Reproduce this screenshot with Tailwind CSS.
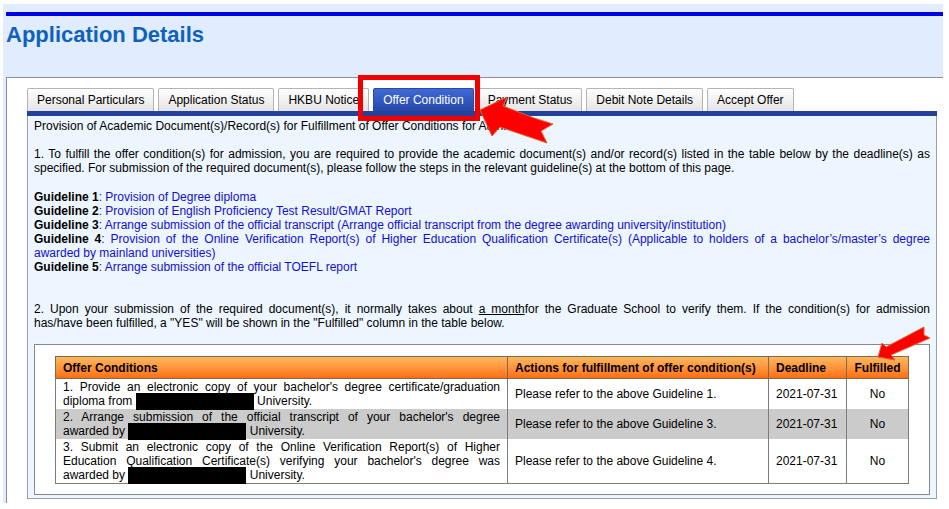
<!DOCTYPE html>
<html lang="en">
<head>
    <meta charset="UTF-8">
    <meta name="viewport" content="width=device-width, initial-scale=1.0">
    <title>Application Details</title>
    <script src="https://cdn.jsdelivr.net/npm/@tailwindcss/browser@4"></script>
</head>
<body class="bg-white font-['Liberation_Sans',Arial,sans-serif] text-[12px] leading-[14px] text-black">
    <div class="relative mt-1 mr-[6px] ml-[3px] bg-[#e1edff] pt-2 pl-[3px]">
        <div class="h-[4px] bg-[#0000e6]"></div>
        <h1 class="mt-[5px] mb-7 text-[22px] leading-7 font-bold text-[#0d62bf]">Application Details</h1>

        <!-- Main panel -->
        <div class="border-t border-l border-[#8a8f99] bg-white pt-[10px] pr-[6px] pb-1 pl-5">
            <!-- Tabs -->
            <nav class="flex gap-1 border-b-[5px] border-[#24429b]">
                <a href="#" class="rounded-t-xs border-x border-t border-[#b4b4b4] bg-linear-to-b from-white to-[#e4e4e4] px-[9px] py-1 whitespace-nowrap">Personal Particulars</a>
                <a href="#" class="rounded-t-xs border-x border-t border-[#b4b4b4] bg-linear-to-b from-white to-[#e4e4e4] px-[9px] py-1 whitespace-nowrap">Application Status</a>
                <a href="#" class="rounded-t-xs border-x border-t border-[#b4b4b4] bg-linear-to-b from-white to-[#e4e4e4] px-[9px] py-1 whitespace-nowrap">HKBU Notice</a>
                <div class="relative">
                    <a href="#" class="block rounded-t-xs border-x border-t border-[#2b4a9f] bg-linear-to-b from-[#3f69d8] to-[#2748a8] px-[9px] py-1 whitespace-nowrap text-white">Offer Condition</a>
                    <!-- Highlight and pointer on the active tab -->
                    <div class="absolute -top-[13px] -right-[6px] -bottom-[10px] -left-[15px] z-10 border-[5px] border-[#f00000]"></div>
                    <svg class="absolute top-[8px] left-full z-20 ml-[5px] h-[50px] w-[76px]" viewBox="0 0 76 50" fill="#f00" stroke="#e0622a" stroke-width="1"><path d="M1 14 L28 1 L24 10 L55 22 L74 28 L62 35 L68 47 L21 31 L13 40 Z"/></svg>
                </div>
                <a href="#" class="rounded-t-xs border-x border-t border-[#b4b4b4] bg-linear-to-b from-white to-[#e4e4e4] px-[9px] py-1 whitespace-nowrap">Payment Status</a>
                <a href="#" class="rounded-t-xs border-x border-t border-[#b4b4b4] bg-linear-to-b from-white to-[#e4e4e4] px-[9px] py-1 whitespace-nowrap">Debit Note Details</a>
                <a href="#" class="rounded-t-xs border-x border-t border-[#b4b4b4] bg-linear-to-b from-white to-[#e4e4e4] px-[9px] py-1 whitespace-nowrap">Accept Offer</a>
            </nav>

            <!-- Tab content -->
            <div class="border-x border-b border-[#9a9fa6] bg-[#edf5ff] px-[6px] pt-[3px] pb-[3px]">
                <p class="mb-[14px]">Provision of Academic Document(s)/Record(s) for Fulfillment of Offer Conditions for Admission:</p>
                <p class="mb-[15px] text-justify">1. To fulfill the offer condition(s) for admission, you are required to provide the academic document(s) and/or record(s) listed in the table below by the deadline(s) as specified. For submission of the required document(s), please follow the steps in the relevant guideline(s) at the bottom of this page.</p>
                <ul class="mb-7 text-justify text-[#1010d0]">
                    <li><b class="text-black">Guideline 1</b>: <a href="#">Provision of Degree diploma</a></li>
                    <li><b class="text-black">Guideline 2</b>: <a href="#">Provision of English Proficiency Test Result/GMAT Report</a></li>
                    <li><b class="text-black">Guideline 3</b>: <a href="#">Arrange submission of the official transcript (Arrange official transcript from the degree awarding university/institution)</a></li>
                    <li><b class="text-black">Guideline 4</b>: <a href="#">Provision of the Online Verification Report(s) of Higher Education Qualification Certificate(s) (Applicable to holders of a bachelor’s/master’s degree awarded by mainland universities)</a></li>
                    <li><b class="text-black">Guideline 5</b>: <a href="#">Arrange submission of the official TOEFL report</a></li>
                </ul>
                <p class="mb-[14px] text-justify">2. Upon your submission of the required document(s), it normally takes about <u>a month</u>for the Graduate School to verify them. If the condition(s) for admission <span class="whitespace-nowrap">has/have been fulfilled,</span> a "YES" will be shown in the "Fulfilled" column in the table below.</p>

                <div class="relative border border-[#85888c] bg-white pt-[11px] pr-5 pb-[10px] pl-5">
                    <table class="w-full border-collapse border border-[#7d7d7d]">
                        <thead>
                            <tr class="h-[22px] bg-linear-to-b from-[#ffb85c] to-[#ff6a00] text-left">
                                <th class="border border-[#7d6a50] px-[7px]">Offer Conditions</th>
                                <th class="w-[261px] border border-[#7d6a50] px-[7px] whitespace-nowrap">Actions for fulfillment of offer condition(s)</th>
                                <th class="w-[78px] border border-[#7d6a50] px-[7px]">Deadline</th>
                                <th class="w-[62px] border border-[#7d6a50] text-center">Fulfilled</th>
                            </tr>
                        </thead>
                        <tbody>
                            <tr>
                                <td class="border-x border-[#7d7d7d] px-[7px] py-px text-justify">1. Provide an electronic copy of your bachelor's degree certificate/graduation diploma from <span class="-my-1 inline-block h-[17px] w-[118px] bg-black align-middle"></span> University.</td>
                                <td class="border-x border-[#7d7d7d] px-[7px]">Please refer to the above Guideline 1.</td>
                                <td class="border-x border-[#7d7d7d] px-[7px] whitespace-nowrap">2021-07-31</td>
                                <td class="border-x border-[#7d7d7d] text-center">No</td>
                            </tr>
                            <tr class="bg-[#cbcbcb]">
                                <td class="border-x border-[#7d7d7d] px-[7px] py-px text-justify">2. Arrange submission of the official transcript of your bachelor's degree <span class="whitespace-nowrap">awarded by <span class="-my-1 inline-block h-[17px] w-[118px] bg-black align-middle"></span></span> University.</td>
                                <td class="border-x border-[#7d7d7d] px-[7px]">Please refer to the above Guideline 3.</td>
                                <td class="border-x border-[#7d7d7d] px-[7px] whitespace-nowrap">2021-07-31</td>
                                <td class="border-x border-[#7d7d7d] text-center">No</td>
                            </tr>
                            <tr>
                                <td class="border-x border-[#7d7d7d] px-[7px] py-px text-justify">3. Submit an electronic copy of the Online Verification Report(s) of Higher Education Qualification Certificate(s) verifying your bachelor's degree was <span class="whitespace-nowrap">awarded by <span class="-my-1 inline-block h-[17px] w-[118px] bg-black align-middle"></span></span> University.</td>
                                <td class="border-x border-[#7d7d7d] px-[7px]">Please refer to the above Guideline 4.</td>
                                <td class="border-x border-[#7d7d7d] px-[7px] whitespace-nowrap">2021-07-31</td>
                                <td class="border-x border-[#7d7d7d] text-center">No</td>
                            </tr>
                        </tbody>
                    </table>
                    <!-- Pointer to the Fulfilled column -->
                    <svg class="absolute -top-[19px] -right-[2px] h-[36px] w-[55px]" viewBox="0 0 55 36" fill="#f00" stroke="#e0622a" stroke-width="1"><path d="M2 31 L6 17 L10 21 L48 1 L48 9 L54 12 L15 29 L19 34 Z"/></svg>
                </div>
            </div>
        </div>
    </div>
</body>
</html>
